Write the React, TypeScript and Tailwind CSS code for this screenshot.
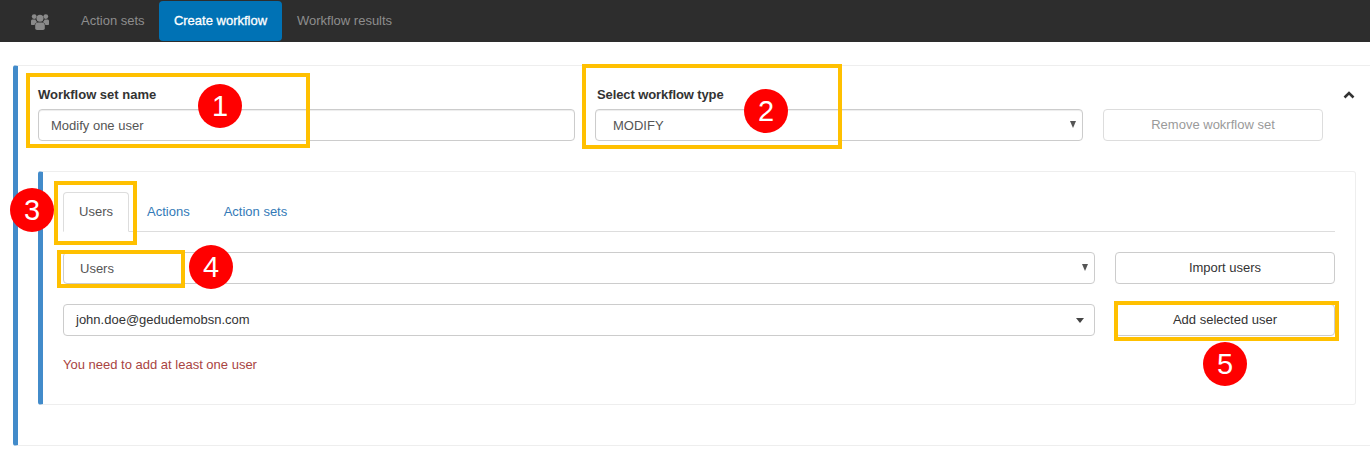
function Callout({ n, className }: { n: number; className: string }) {
  return (
    <div className={`absolute w-[44px] h-[44px] rounded-full bg-[#ff0000] text-white text-[29px] leading-[44px] text-center ${className}`}>
      {n}
    </div>
  )
}

function GroupIcon() {
  return (
    <svg width="18" height="17" viewBox="0 0 18 17" className="text-[#8a8a8a]" fill="currentColor">
      <circle cx="3.2" cy="3.6" r="2.4" />
      <circle cx="14.8" cy="3.6" r="2.4" />
      <path d="M0 8.2C0 7 1 6.6 2 6.6h2.4c.5 1.300 1 2 1.800 2.600C4.500 9.800 3.800 11 3.600 12H1c-.6 0-1-.4-1-1z" />
      <path d="M18 8.200C18 7 17 6.600 16 6.600h-2.400c-.5 1.300-1 2-1.800 2.600 1.700.6 2.400 1.800 2.600 2.800H17c.6 0 1-.4 1-1z" />
      <circle cx="9" cy="5.300" r="3.500" />
      <path d="M4.200 12.500c0-1.700 1.100-2.900 2.800-2.900h4c1.700 0 2.800 1.200 2.800 2.900v2.800c0 1-.8 1.700-1.800 1.700H6c-1 0-1.800-.7-1.800-1.700z" />
    </svg>
  )
}

export default function App() {
  return (
    <div className="relative h-[454px] overflow-hidden bg-white font-['Liberation_Sans',Arial,sans-serif] text-[13px] text-[#333]">
      <nav className="h-[42px] bg-[#2d2d2d] flex items-start pt-px">
        <div className="w-[66px] h-[40px] flex items-center pl-[31px]">
          <GroupIcon />
        </div>
        <a className="w-[93px] h-[40px] leading-[39px] pl-[15px] text-[#8e8e8e]">Action sets</a>
        <a className="w-[123px] h-[40px] leading-[39px] text-center rounded-[4px] bg-[#0072b5] text-white [-webkit-text-stroke:0.3px_white]">Create workflow</a>
        <a className="h-[40px] leading-[39px] pl-[15px] text-[#8e8e8e]">Workflow results</a>
      </nav>

      <section className="mt-[23px] ml-[13px] h-[381px] border-l-[5px] border-l-[#428bca] border-y border-y-[#eeeeee] rounded-l-[3px] pl-[20px] pt-[21px]">
        <div className="flex items-end">
          <div className="w-[537px]">
            <label className="block font-bold mb-[6px] leading-[16px] text-[13px]">Workflow set name</label>
            <input
              readOnly
              value="Modify one user"
              className="w-full h-[32px] border border-[#cccccc] rounded-[4px] px-[12px] text-[13px] text-[#555] shadow-[inset_0_1px_1px_rgba(0,0,0,0.075)]"
            />
          </div>
          <div className="w-[488px] ml-[20px]">
            <label className="block font-bold mb-[6px] pl-[2px] tracking-[-0.1px] leading-[16px] text-[13px]">Select workflow type</label>
            <div className="relative">
              <select className="block w-full h-[32px] appearance-none border border-[#cccccc] rounded-[4px] pl-[17px] pt-[2px] text-[13px] text-[#555] bg-white shadow-[inset_0_1px_1px_rgba(0,0,0,0.075)]">
                <option>MODIFY</option>
              </select>
              <span className="absolute right-[7px] top-[12px] w-0 h-0 border-x-[3px] border-x-transparent border-t-[7px] border-t-[#555]" />
            </div>
          </div>
          <button className="w-[220px] h-[32px] ml-[20px] border border-[#dddddd] rounded-[4px] text-[#9a9a9a] text-[13px] bg-white">
            Remove wokrflow set
          </button>
          <svg width="12" height="8" viewBox="0 0 12 8" fill="none" className="ml-[20px] mb-[42px] text-[#333]">
            <path d="M1.500 6.500L6 2l4.500 4.500" stroke="currentColor" strokeWidth="2.600" />
          </svg>
        </div>

        <div className="mt-[30px] mr-[14px] h-[234px] border-l-[5px] border-y border-r border-[#eeeeee] border-l-[#428bca] rounded-[3px] pt-[20px] pl-[20px] pr-[20px]">
          <div className="flex h-[40px] border-b border-[#dddddd]">
            <div className="w-[66px] h-[40px] border border-[#dddddd] border-b-white rounded-t-[4px] bg-white leading-[38px] text-center text-[#555]">Users</div>
            <a className="ml-[18px] leading-[40px] text-[#337ab7]">Actions</a>
            <a className="ml-[34px] leading-[40px] text-[#337ab7]">Action sets</a>
          </div>

          <div className="flex mt-[20px]">
            <div className="relative flex-1">
              <select className="block w-full h-[32px] appearance-none border border-[#cccccc] rounded-[4px] pl-[16px] pt-[2px] text-[13px] text-[#555] bg-white">
                <option>Users</option>
              </select>
              <span className="absolute right-[7px] top-[12px] w-0 h-0 border-x-[3px] border-x-transparent border-t-[7px] border-t-[#555]" />
            </div>
            <button className="w-[220px] h-[32px] ml-[20px] border border-[#cccccc] rounded-[4px] text-[#333] text-[13px] bg-white">Import users</button>
          </div>

          <div className="flex mt-[20px]">
            <div className="relative flex-1 h-[32px] border border-[#cccccc] rounded-[4px] pl-[12px] leading-[30px] text-[#333]">
              john.doe@gedudemobsn.com
              <span className="absolute right-[10px] top-[13px] w-0 h-0 border-x-[4px] border-x-transparent border-t-[5px] border-t-[#444]" />
            </div>
            <button className="w-[220px] h-[32px] ml-[20px] border border-[#cccccc] rounded-[4px] text-[#333] text-[13px] bg-white">Add selected user</button>
          </div>

          <p className="mt-[20px] leading-[18px] text-[#a94442]">You need to add at least one user</p>
        </div>
      </section>

      <div className="absolute left-[26px] top-[73px] w-[284px] h-[75px] border-[4px] border-[#ffc000]" />
      <div className="absolute left-[582px] top-[64px] w-[260px] h-[85px] border-[4px] border-[#ffc000]" />
      <div className="absolute left-[54px] top-[181px] w-[83px] h-[64px] border-[4px] border-[#ffc000]" />
      <div className="absolute left-[57px] top-[250px] w-[128px] h-[38px] border-[4px] border-[#ffc000]" />
      <div className="absolute left-[1114px] top-[301px] w-[225px] h-[40px] border-[4px] border-[#ffc000]" />

      <Callout n={1} className="left-[198px] top-[84px]" />
      <Callout n={2} className="left-[744px] top-[89px]" />
      <Callout n={3} className="left-[10px] top-[188px]" />
      <Callout n={4} className="left-[189px] top-[245px]" />
      <Callout n={5} className="left-[1203px] top-[342px]" />
    </div>
  )
}
